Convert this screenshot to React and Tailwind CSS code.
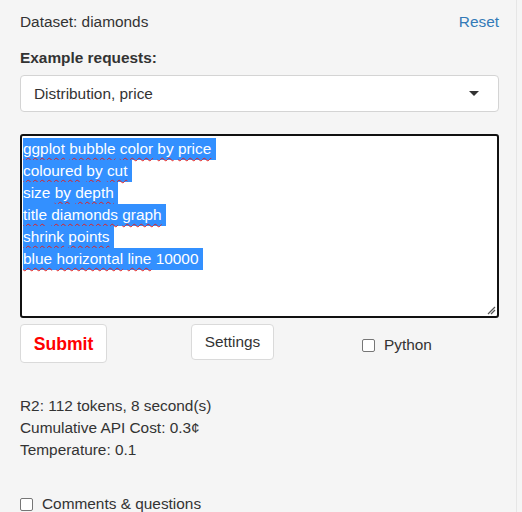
import React from 'react';

const font = { fontFamily: '"Liberation Sans", Arial, sans-serif' };

// each line: list of [word, misspelled]
const requestLines = [
  [['ggplot', true], ['bubble', true], ['color', true], ['by', true], ['price', true]],
  [['coloured', true], ['by', true], ['cut', true]],
  [['size', false], ['by', true], ['depth', true]],
  [['title', true], ['diamonds', true], ['graph', true]],
  [['shrink', true], ['points', true]],
  [['blue', true], ['horizontal', true], ['line', true], ['10000', false]],
];

const Checkbox = () => (
  <span className="inline-block w-[13px] h-[13px] rounded-[2px] border border-[#767676] bg-white shrink-0" />
);

export default function App() {
  return (
    <div className="w-[522px] h-[512px] overflow-hidden bg-[#f5f5f5] text-[#333] text-[15.4px] leading-[22px]" style={font}>
      <div className="w-[517px] h-full border-r border-[#e6e6e6] px-[20px] pt-[11px]">
        {/* Dataset header */}
        <div className="flex justify-between w-[479px]">
          <span>Dataset: diamonds</span>
          <span className="text-[#337ab7]">Reset</span>
        </div>

        <div className="mt-[14px] font-bold">Example requests:</div>

        {/* Select */}
        <div className="mt-[6px] w-[479px] h-[37px] bg-white border border-[#d4d4d4] rounded-[4px] flex items-center justify-between pl-[13px] pr-[19px]">
          <span>Distribution, price</span>
          <svg width="10" height="6" viewBox="0 0 10 6">
            <path d="M0 0 L10 0 L5 5 Z" fill="#333" />
          </svg>
        </div>

        {/* Textarea */}
        <div className="relative mt-[22px] w-[479px] h-[184px] bg-white border-2 border-[#111] rounded-[3px] pl-[1px] pt-[2px]">
          {requestLines.map((line, i) => (
            <div key={i} className="h-[22px]">
              <span className="inline-block bg-[#3390ff] text-white leading-[22px] whitespace-pre">
                {line.map(([w, bad], j) => (
                  <React.Fragment key={j}>
                    <span className={bad ? 'underline decoration-wavy decoration-[#e02020] decoration-1 underline-offset-[3px]' : ''}>{w}</span>
                    {' '}
                  </React.Fragment>
                ))}
              </span>
            </div>
          ))}
          <svg className="absolute right-[1px] bottom-[1px]" width="10" height="10" viewBox="0 0 10 10">
            <path d="M9 2 L2 9 M9 5 L5 9" stroke="#555" strokeWidth="1.2" />
          </svg>
        </div>

        {/* Buttons row */}
        <div className="mt-[6px] flex items-start">
          <button className="w-[87px] h-[39px] bg-white border border-[#dadada] rounded-[4px] text-[#ff0000] font-bold text-[17.6px]" style={font}>
            Submit
          </button>
          <button className="ml-[84px] w-[83px] h-[36px] bg-white border border-[#dadada] rounded-[4px] text-[#333] text-[15.4px]" style={font}>
            Settings
          </button>
          <label className="ml-[88px] mt-[10px] flex items-center gap-[9px]">
            <Checkbox />
            <span>Python</span>
          </label>
        </div>

        {/* Stats */}
        <div className="mt-[32px]">
          <div>R2: 112 tokens, 8 second(s)</div>
          <div>Cumulative API Cost: 0.3¢</div>
          <div>Temperature: 0.1</div>
        </div>

        <label className="mt-[32px] flex items-center gap-[9px]">
          <Checkbox />
          <span>Comments &amp; questions</span>
        </label>
      </div>
    </div>
  );
}
